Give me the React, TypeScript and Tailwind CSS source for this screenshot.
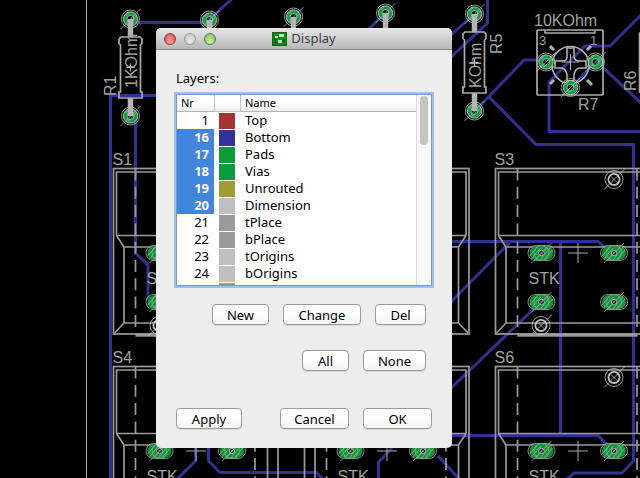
import React, { useState } from 'react';

interface Layer {
  nr: number;
  name: string;
  color: string;
}

const layers: Layer[] = [
  { nr: 1, name: 'Top', color: 'bg-[#a53531]' },
  { nr: 16, name: 'Bottom', color: 'bg-[#32329b]' },
  { nr: 17, name: 'Pads', color: 'bg-[#0c9b3a]' },
  { nr: 18, name: 'Vias', color: 'bg-[#0c9b3a]' },
  { nr: 19, name: 'Unrouted', color: 'bg-[#a09c35]' },
  { nr: 20, name: 'Dimension', color: 'bg-[#bfbfbf]' },
  { nr: 21, name: 'tPlace', color: 'bg-[#9b9b9b]' },
  { nr: 22, name: 'bPlace', color: 'bg-[#9b9b9b]' },
  { nr: 23, name: 'tOrigins', color: 'bg-[#bfbfbf]' },
  { nr: 24, name: 'bOrigins', color: 'bg-[#bfbfbf]' },
  { nr: 25, name: '', color: 'bg-[#9b9b9b]' },
];

interface PointProps {
  x: number;
  y: number;
}

function RoundPad({ x, y }: PointProps) {
  return (
    <g transform={`translate(${x} ${y})`} fill="none">
      <circle r="5" stroke="#159a45" strokeWidth="4" />
      <circle r="3.5" stroke="#7fcf9a" strokeWidth="0.7" />
      <circle r="7.2" stroke="#c2cfc4" strokeWidth="0.9" />
      <circle r="9" stroke="#a8a8a8" strokeWidth="0.9" />
      <path d="M-10 10L10-10M-5-3L-1-7M-3 6L6-3" stroke="#b9c4bb" strokeWidth="0.7" />
    </g>
  );
}

function LongPad({ x, y }: PointProps) {
  return (
    <g transform={`translate(${x} ${y})`} fill="none">
      <rect x="-12" y="-7" width="24" height="14" rx="7" fill="#12913c" />
      <rect x="-13.5" y="-7.5" width="27" height="15" rx="7.5" stroke="#a3b5a6" strokeWidth="0.8" />
      <path d="M-12 3L-4-6M-10 6L-1-5M-6 7L6-6M3 6L11-3M-1 7L9-6" stroke="#7fc08c" strokeWidth="0.8" />
      <circle r="7.5" stroke="#86ad8e" strokeWidth="0.8" />
      <circle r="2.8" fill="#0a0a0a" stroke="#b5c8b8" strokeWidth="0.8" />
      <path d="M-10 10L10-10" stroke="#999" strokeWidth="0.8" />
      <path d="M-2-2L2 2M-2 2L2-2" stroke="#aaa" strokeWidth="0.6" />
    </g>
  );
}

function Hole({ x, y }: PointProps) {
  return (
    <g transform={`translate(${x} ${y})`} fill="none" stroke="#c4c4c4">
      <circle r="5.6" strokeWidth="1.8" />
      <circle r="9" strokeWidth="0.8" />
      <path d="M-10 10L11-11M-3-3L3 3" strokeWidth="0.8" />
    </g>
  );
}

function Switch({ x, y, name }: PointProps & { name?: string }) {
  return (
    <g transform={`translate(${x} ${y})`}>
      <g fill="none" stroke="#9a9a9a" strokeWidth="1.7">
        <rect width="164.5" height="165.5" />
        <path d="M3 67V3.5H161.5V67M3 67H161.5M10.5 78.5H154M3 67L10.5 78.5V154.5M161.5 67L154 78.5V154.5M10.5 154.5H154M10.5 154.5L1 164.5M154 154.5L163.5 164.5" />
        <path d="M22 0V165M141.5 0V165" strokeDasharray="12 6.3" />
        <path d="M22 166.5H142" strokeWidth="3.5" />
      </g>
      <path d="M72.5 84.5H92.5M82.5 74.5V94.5" stroke="#aaa" strokeWidth="1" />
      <text x="33" y="115.5">STK</text>
      {name && <text x="-1" y="-4">{name}</text>}
      <LongPad x={46} y={84.5} />
      <LongPad x={118.5} y={84.5} />
      <LongPad x={46} y={133.5} />
      <LongPad x={118.5} y={133.5} />
      <Hole x={118.5} y={11} />
      <Hole x={45.5} y={157} />
    </g>
  );
}

function Resistor({ x, y, children }: PointProps & { children?: React.ReactNode }) {
  return (
    <g transform={`translate(${x} ${y})`}>
      <RoundPad x={0} y={0} />
      <RoundPad x={0} y={97} />
      <path d="M0 0V18M0 79V97" stroke="#b4b4b4" strokeWidth="5.5" />
      <path
        d="M-9.500 18H9.500L11.500 20V24.500L10 26V73H11.500V79H-11.500V73H-10V26L-11.500 24.500V20Z"
        fill="none"
        stroke="#aaa"
        strokeWidth="1.7"
      />
      <path d="M-4 48.500H4M0 44.500V52.500" stroke="#ccc" strokeWidth="1" />
      {children}
    </g>
  );
}

function Trimmer() {
  return (
    <g>
      <rect x="537" y="30" width="66" height="65" rx="1" fill="none" stroke="#aaa" strokeWidth="1.7" />
      <path d="M545 30V33H595V30" fill="none" stroke="#aaa" strokeWidth="1.5" />
      <g fill="none" stroke="#b0b0b0" strokeWidth="1.6">
        <circle cx="570.5" cy="65" r="18.5" />
        <path d="M567 48H574V57Q575 61 579 61H586V68H579Q575 69 574 75V81H567V75Q566 69 562 68H555V61H562Q567 61 567 57Z" />
        <path d="M550 46L554 50M587 50L591 46M550 84L554 80M587 80L592 85" strokeWidth="3" />
        <path d="M562 62H579M570.5 54V70" strokeWidth="1" />
      </g>
      <RoundPad x={546} y={62} />
      <RoundPad x={595.5} y={62} />
      <RoundPad x={570.5} y={87.5} />
      <text x="534" y="26">10KOhm</text>
      <text x="539" y="45" fontSize="13">3</text>
      <text x="590" y="45" fontSize="13">1</text>
      <text x="578" y="110">R7</text>
    </g>
  );
}

function Board() {
  return (
    <svg
      className="absolute inset-0 h-full w-full"
      viewBox="0 0 640 478"
      preserveAspectRatio="xMinYMin slice"
      fontFamily="'Liberation Sans', Arial, sans-serif"
      fontSize="16"
      fill="#a0a0a0"
      aria-label="Board"
    >
      <path d="M86.500 0V478" stroke="#aaa" strokeWidth="1" />
      {/* bottom copper */}
      <g fill="none" stroke="#313192" strokeWidth="3">
        <path d="M130 22.500H206L235-4M110.500 478V95.500H160M135.500 116V253L148 265V300" />
        <path d="M385 13L365 33M474 14L450 36M487.500 0V23L450 58" />
        <path d="M474 112L524 60H546M488 96L536 144.500H633.500V461L622 473H574L566 480" />
        <path d="M642 14L610 46H585L549 82V131.500H642M596 61L642 104M572 86L594 64" />
        <path d="M450 241.500H598L612 254M510 242L450 303M560.500 241V433M541 302L450 389" />
        <path d="M450 435.500H598L612 450M438 456L460 480" />
        <path d="M195.500 440V461L176 480M208.500 440V461L220 472.500H316L324 480M392 448L378.500 462V480" />
      </g>
      <Switch x={113.5} y={168.5} name="S1" />
      <Switch x={304.5} y={168.5} />
      <Switch x={495.5} y={168.5} name="S3" />
      <Switch x={113.5} y={366.5} name="S4" />
      <Switch x={304.5} y={366.5} />
      <Switch x={495.5} y={366.5} name="S6" />
      <Resistor x={130.5} y={19}>
        <text transform="translate(6 69) rotate(-90)">1KOhm</text>
        <text transform="translate(-15 77) rotate(-90)">R1</text>
      </Resistor>
      <Resistor x={209.5} y={20} />
      <Resistor x={293.5} y={17} />
      <Resistor x={385.5} y={13} />
      <Resistor x={474.5} y={14}>
        <text transform="translate(6 74) rotate(-90)">KOhm</text>
        <text transform="translate(27 40) rotate(-90)">R5</text>
      </Resistor>
      <Trimmer />
      <text transform="translate(636 91) rotate(-90)">R6</text>
      <path d="M642 33H639.500V92H642" fill="none" stroke="#aaa" strokeWidth="1.7" />
    </svg>
  );
}

function BoardIcon() {
  return (
    <svg width="15" height="14" viewBox="0 0 15 14" aria-hidden="true">
      <rect x="0.5" y="0.5" width="14" height="13" fill="#0b8a1c" stroke="#17631d" />
      <path d="M3 5V11H6M9 9H12V7" fill="none" stroke="#055010" strokeWidth="1.5" />
      <path d="M7 2H12V5H7ZM3 4H6V6H3ZM6 8H10V11H6Z" fill="#c3dfc2" />
    </svg>
  );
}

interface PushButtonProps {
  children: React.ReactNode;
  className: string;
  onClick?: () => void;
}

function PushButton({ children, className, onClick }: PushButtonProps) {
  return (
    <button
      type="button"
      onClick={onClick}
      className={`h-[21px] rounded-[4px] border border-[#9b9b9b] bg-linear-to-b from-white from-45% to-[#f1f1f1] text-center leading-[18px] shadow-[0_1px_0_#dadada] active:to-gray-300 ${className}`}
    >
      {children}
    </button>
  );
}

export default function App() {
  const [selected, setSelected] = useState<number[]>([16, 17, 18, 19, 20]);

  const toggle = (nr: number) => {
    setSelected((prev) => (prev.includes(nr) ? prev.filter((n) => n !== nr) : [...prev, nr]));
  };

  return (
    <main className="relative min-h-screen overflow-hidden bg-black font-['Noto_Sans','Open_Sans',sans-serif] text-[13px] text-black">
      <Board />
      <section
        role="dialog"
        aria-labelledby="dialog-title"
        className="absolute top-7 left-[156px] w-[296px] overflow-hidden rounded-[5px] bg-[#ededed]"
      >
        <header className="relative flex h-[22px] items-center justify-center gap-1 border-b border-[#8a8a8a] bg-linear-to-b from-[#e8e8e8] to-[#b8b8b8]">
          <div className="absolute left-2 flex gap-2">
            <button
              type="button"
              aria-label="Close"
              className="size-3 rounded-full border border-[#9a3b38] bg-radial-[at_50%_75%] from-[#ffaaa4] to-[#dd3c3a]"
            />
            <button
              type="button"
              aria-label="Minimize"
              className="size-3 rounded-full border border-[#999] bg-radial-[at_50%_75%] from-[#ededed] to-[#bcbcbc]"
            />
            <button
              type="button"
              aria-label="Zoom"
              className="size-3 rounded-full border border-[#56803e] bg-radial-[at_50%_75%] from-[#d1f5a8] to-[#75b852]"
            />
          </div>
          <BoardIcon />
          <h1 id="dialog-title" className="text-[#3c3c3c]">Display</h1>
        </header>

        <div className="px-5 pt-[18px] pb-[19px]">
          <h2 id="layers-label" className="mb-[6px] leading-5">Layers:</h2>
          <div className="flex h-[192px] overflow-hidden border border-[#6f9ccc] bg-white shadow-[0_0_0_2px_#9fc1e4]">
            <div className="flex-1 overflow-hidden">
              <table aria-labelledby="layers-label" className="w-full table-fixed border-separate border-spacing-0">
                <thead>
                  <tr className="bg-linear-to-b from-white from-50% to-[#ececec] text-left text-[11px] leading-4">
                    <th className="w-[37px] border-b border-[#b5b5b5] pl-1 font-normal">Nr</th>
                    <th aria-label="Color" className="w-[27px] border-x border-b border-[#c0c0c0]" />
                    <th className="border-b border-[#b5b5b5] pl-1 font-normal">Name</th>
                  </tr>
                </thead>
                <tbody>
                  {layers.map((layer) => (
                    <tr key={layer.nr} onClick={() => toggle(layer.nr)} className="h-[17px] leading-[17px]">
                      <td
                        className={`pr-[5px] text-right ${
                          selected.includes(layer.nr) ? 'bg-[#4385dc] font-bold text-white' : ''
                        }`}
                      >
                        {layer.name && layer.nr}
                      </td>
                      <td className="pl-[5px]">
                        <div className={`h-4 w-4 ${layer.color}`} />
                      </td>
                      <td className="pl-1">{layer.name}</td>
                    </tr>
                  ))}
                </tbody>
              </table>
            </div>
            <div className="flex w-[15px] justify-center border-l border-[#dedede] bg-[#fafafa] pt-px">
              <div className="h-[49px] w-2 rounded-full bg-[#c4c4c4]" />
            </div>
          </div>

          <div className="mt-[18px] flex justify-end gap-[14px] pr-[6px]">
            <PushButton className="w-[57px]">New</PushButton>
            <PushButton className="w-[78px]">Change</PushButton>
            <PushButton className="w-[51px]">Del</PushButton>
          </div>
          <div className="mt-[25px] flex justify-end gap-[14px] pr-[6px]">
            <PushButton className="w-[47px]" onClick={() => setSelected(layers.map((layer) => layer.nr))}>
              All
            </PushButton>
            <PushButton className="w-[63px]" onClick={() => setSelected([])}>
              None
            </PushButton>
          </div>
          <div className="mt-[37px] flex gap-[14px]">
            <PushButton className="mr-auto w-[66px]">Apply</PushButton>
            <PushButton className="w-[69px]">Cancel</PushButton>
            <PushButton className="w-[69px]">OK</PushButton>
          </div>
        </div>
      </section>
    </main>
  );
}
